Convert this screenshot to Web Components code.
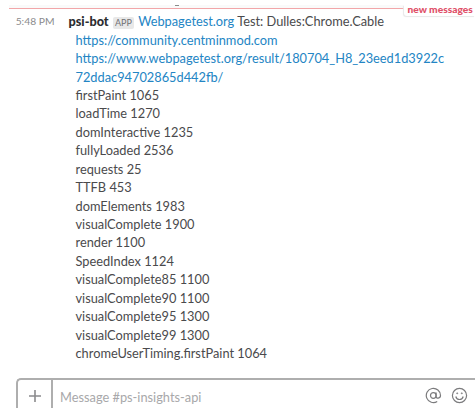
<!DOCTYPE html>
<html lang="en"><head><meta charset="utf-8"><title>Messages</title>
<style>html,body{margin:0;height:100%;overflow:hidden;background:#fff}body{font-family:Lato,sans-serif;color:#4a4a4c}</style></head>
<body><chat-view></chat-view>
<script>
const define=(name,html)=>customElements.define(name,class extends HTMLElement{
  constructor(){super();this.attachShadow({mode:'open'}).innerHTML=html;}
});
define('unread-divider',`<style>
:host{display:block;position:relative;box-sizing:border-box;height:14px;margin-left:9px;padding-top:5px}
.band{height:3px;background:#fafafa;border-bottom:1px solid #f2a6a9}
.mark{position:absolute;left:166px;top:5px;width:4px;height:1px;background:#8b8b8b}
.label{position:absolute;right:0;top:5px;width:71px;height:11px;background:#fff;border-radius:0 0 0 3px;box-shadow:-1px 1px 1px #e8e8e8}
.label span{display:block;margin:-3px 0 0 3.5px;font:900 10.2px/14px Lato,sans-serif;color:#e04f68;white-space:nowrap}
</style><div class="band"></div><i class="mark"></i><div class="label"><span><slot></slot></span></div>`);
define('text-link',`<style>:host{color:#2385c4}</style><slot></slot>`);
define('app-badge',`<style>:host{display:inline-block;box-sizing:border-box;width:21.5px;height:12px;margin:0 4px;background:#e8e8e8;border-radius:2px;font-size:9px;line-height:12px;text-align:center;color:#717274;vertical-align:0;font-weight:400}</style><slot></slot>`);
define('message-line',`<style>:host{display:block;height:18.45px;line-height:18.45px;font-size:12.8px;white-space:nowrap}</style><slot></slot>`);
define('chat-message',`<style>
:host{display:grid;grid-template-columns:68.5px 1fr}
.time{font-size:10.3px;line-height:18.45px;text-align:right;padding-right:14px;color:#8b8b8d;white-space:nowrap}
.head{height:18.45px;font-size:12.8px;line-height:18.45px;white-space:nowrap}
.body{padding-left:7px}
b{font-weight:900;font-size:12.7px;color:#2c2d30}
</style><div class="time"><slot name="time"></slot></div><div><div class="head"><b><slot name="name"></slot></b><app-badge>APP</app-badge><slot name="title"></slot></div><div class="body"><slot></slot></div></div>`);
define('message-composer',`<style>
:host{display:grid;grid-template-columns:35px 1fr 17px 17px;box-sizing:border-box;height:42px;margin-left:16px;padding-right:7px;border:2px solid #aeaeae;border-right:0;border-radius:5px 0 0 0;align-items:stretch}
.plus{border-right:2px solid #aeaeae;display:flex;justify-content:center;padding-top:9px}
.plus svg{stroke:#8b8b8d}
.text{font-size:12.8px;line-height:18px;padding:7.8px 0 0 7px;color:#a8a8aa}
svg{display:block;fill:none;stroke:#7b7b7d}
.at,.smile{padding-top:7px}
.at{margin-left:-9px}
</style><div class="plus"><svg width="14" height="14" stroke-width="1.6" viewBox="0 0 14 14"><path d="M7 1v12M1 7h12"/></svg></div><div class="text"><slot></slot></div>
<svg class="at" width="17" height="17" viewBox="0 0 17 17" stroke-width="1.2"><circle cx="8.3" cy="8.5" r="2.8"/><path d="M11.1 5.5v4.1c0 2.4 4.4 2 4.4-1.1A7.1 7.1 0 1 0 12.2 14.5"/></svg>
<svg class="smile" width="17" height="17" viewBox="0 0 17 17" stroke-width="1.2"><circle cx="8.5" cy="8.5" r="7.1"/><path d="M4.8 9.5c1 4 6.4 4 7.4 0"/><circle cx="6.2" cy="6.3" r=".6" fill="#7b7b7d" stroke-width=".6"/><circle cx="10.8" cy="6.3" r=".6" fill="#7b7b7d" stroke-width=".6"/></svg>`);
const rows=['firstPaint 1065','loadTime 1270','domInteractive 1235','fullyLoaded 2536','requests 25','TTFB 453','domElements 1983','visualComplete 1900','render 1100','SpeedIndex 1124','visualComplete85 1100','visualComplete90 1100','visualComplete95 1300','visualComplete99 1300','chromeUserTiming.firstPaint 1064'];
define('chat-view',`<style>:host{display:flex;flex-direction:column;height:408px;width:475px;overflow:hidden}unread-divider,message-composer{flex-shrink:0}chat-message{height:364px;margin-top:-1.8px;margin-bottom:1.8px;flex-shrink:0}</style>
<unread-divider>new messages</unread-divider>
<chat-message><span slot="time">5:48 PM</span><span slot="name">psi-bot</span><span slot="title"><text-link>Webpagetest.org</text-link> Test: Dulles:Chrome.Cable</span>
<message-line><text-link>https://community.centminmod.com</text-link></message-line>
<message-line><text-link>https://www.webpagetest.org/result/180704_H8_23eed1d3922c</text-link></message-line>
<message-line><text-link>72ddac94702865d442fb/</text-link></message-line>
${rows.map(r=>`<message-line>${r}</message-line>`).join('')}</chat-message>
<message-composer>Message #ps-insights-api</message-composer>`);
</script></body></html>
